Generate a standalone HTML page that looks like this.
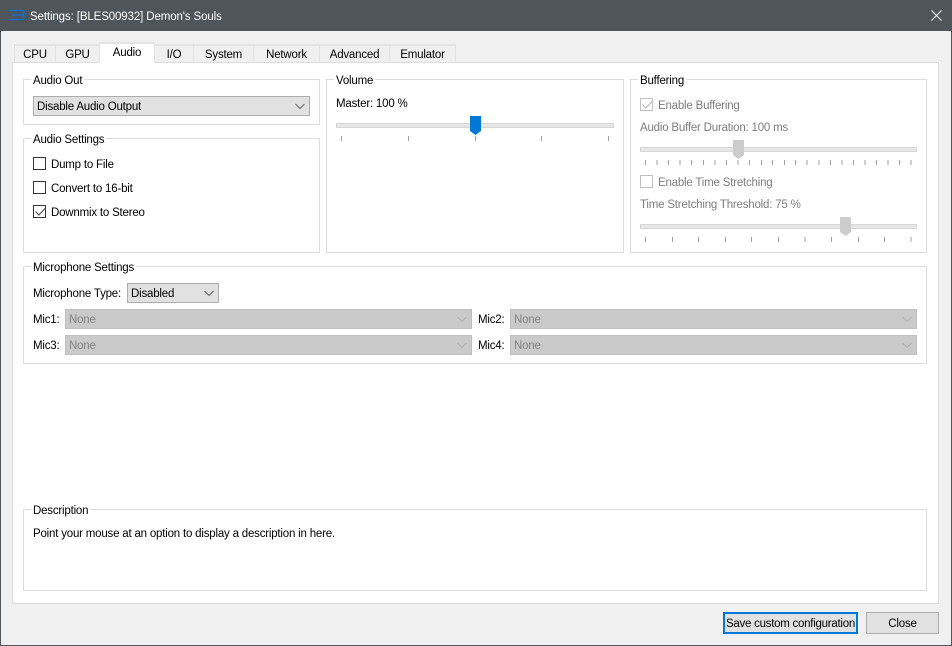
<!DOCTYPE html>
<html><head><meta charset="utf-8"><style>
html,body{margin:0;padding:0}
body{width:952px;height:646px;overflow:hidden;position:relative;background:#f0f0f0;font:11.5px/16px "Liberation Sans",sans-serif;color:#000;letter-spacing:-.2px}
div,span.t{position:absolute;box-sizing:border-box;white-space:nowrap}
.t{height:18px;line-height:18px}
.g{border:1px solid #dcdcdc;background:#fff}
.l{background:#fff;padding:0 2px;height:14px;line-height:14px}
.tab{top:44px;height:18px;background:#f0f0f0;border:2px solid #e3e3e3;border-bottom:0;border-left-width:1px;border-right-width:1px;text-align:center;line-height:19px}
.c{background:#e1e1e1;border:1px solid #adadad;height:20px;line-height:20px;padding-left:3px}
.d{background:#cacaca;border-color:#bfbfbf;color:#838383}
.c svg{position:absolute;right:3px;top:5px}
.cb{width:13px;height:13px;border:1px solid #333;background:#fff}
.cb.x{border-color:#c0c0c0}
.dis{color:#7d7d7d}
.gr{height:5px;background:#e6e6e6;border:1px solid #d6d6d6}
.tk{width:1px;height:5px;background:#a0a0a0}
.b{background:#e1e1e1;border:1px solid #adadad;height:22px;top:612px;text-align:center;line-height:22px}
</style></head><body>
<div style="left:0;top:0;width:952px;height:31px;background:#4f565b"></div>
<div style="left:0;top:0;width:1px;height:646px;background:#4f565b"></div>
<div style="left:951px;top:0;width:1px;height:646px;background:#4f565b"></div>
<div style="left:0;top:645px;width:952px;height:1px;background:#4f565b"></div>
<svg style="position:absolute;left:9px;top:9px" width="16" height="12"><path d="M0 1.5H13Q15 1.5 15 3V4.5Q15 6 13 6H3M3 6H13Q15 6 15 7.5V9Q15 10.5 13 10.5H0" fill="none" stroke="#0a6fd8" stroke-width="1.3"/></svg>
<div class="t" style="left:30px;top:8px;color:#fff;letter-spacing:-.12px">Settings: [BLES00932] Demon's Souls</div>
<svg style="position:absolute;left:931px;top:10px" width="11" height="11"><path d="M.5 .5L10.5 10.5M10.5 .5L.5 10.5" stroke="#fff" stroke-width="1.1"/></svg>

<div style="left:12px;top:62px;width:927px;height:542px;background:#fff;border:1px solid #dcdcdc"></div>
<div class="tab" style="left:14px;width:42px">CPU</div>
<div class="tab" style="left:55px;width:45px">GPU</div>
<div class="tab" style="left:154px;width:40px">I/O</div>
<div class="tab" style="left:193px;width:61px">System</div>
<div class="tab" style="left:253px;width:67px">Network</div>
<div class="tab" style="left:319px;width:71px">Advanced</div>
<div class="tab" style="left:389px;width:67px">Emulator</div>
<div class="tab" style="left:99px;top:42px;width:56px;height:21px;background:#fff;line-height:19px;border-color:#e3e3e3">Audio</div>

<div class="g" style="left:23px;top:79px;width:297px;height:46px"></div>
<div class="l" style="left:31px;top:74px">Audio Out</div>
<div class="c" style="left:33px;top:96px;width:277px">Disable Audio Output<svg width="12" height="8"><path d="M1.5 2L6 6.5L10.5 2" fill="none" stroke="#666"/></svg></div>

<div class="g" style="left:23px;top:138px;width:297px;height:115px"></div>
<div class="l" style="left:31px;top:133px">Audio Settings</div>
<div class="cb" style="left:33px;top:157px"></div><div class="t" style="left:51px;top:156px">Dump to File</div>
<div class="cb" style="left:33px;top:181px"></div><div class="t" style="left:51px;top:180px">Convert to 16-bit</div>
<div class="cb" style="left:33px;top:205px"><svg style="position:absolute;left:1px;top:1px" width="11" height="9"><path d="M.5 4.5L3.8 8L10.5 1" fill="none" stroke="#555" stroke-width="1.2"/></svg></div><div class="t" style="left:51px;top:204px">Downmix to Stereo</div>

<div class="g" style="left:326px;top:79px;width:298px;height:174px"></div>
<div class="l" style="left:334px;top:74px">Volume</div>
<div class="t" style="left:336px;top:95px">Master: 100 %</div>
<div class="gr" style="left:336px;top:123px;width:278px"></div>
<svg style="position:absolute;left:470px;top:116px" width="11" height="19"><path d="M0 0H11V15L5.5 19L0 15Z" fill="#0078d7"/></svg>
<div class="tk" style="left:341px;top:136px"></div><div class="tk" style="left:408px;top:136px"></div><div class="tk" style="left:475px;top:136px"></div><div class="tk" style="left:541px;top:136px"></div><div class="tk" style="left:608px;top:136px"></div>

<div class="g" style="left:630px;top:79px;width:297px;height:174px"></div>
<div class="l" style="left:638px;top:74px">Buffering</div>
<div class="cb x" style="left:640px;top:98px"><svg style="position:absolute;left:1px;top:1px" width="11" height="9"><path d="M.5 4.5L3.8 8L10.5 1" fill="none" stroke="#bbb" stroke-width="1.2"/></svg></div>
<div class="t dis" style="left:658px;top:97px">Enable Buffering</div>
<div class="t dis" style="left:640px;top:119px">Audio Buffer Duration: 100 ms</div>
<div class="gr" style="left:640px;top:147px;width:277px"></div>
<svg style="position:absolute;left:733px;top:140px" width="11" height="19"><path d="M0 0H11V15L5.5 19L0 15Z" fill="#cccccc"/></svg>
<svg style="position:absolute;left:640px;top:160px" width="280" height="5"><path d="M5.5 0V5M17 0V5M28.5 0V5M40 0V5M51.5 0V5M63.5 0V5M75 0V5M86.5 0V5M98 0V5M109.5 0V5M121.5 0V5M132.5 0V5M144.5 0V5M155.5 0V5M167 0V5M179 0V5M190.5 0V5M202 0V5M213.5 0V5M225 0V5M236.5 0V5M248 0V5M259.5 0V5M271 0V5" stroke="#a0a0a0"/></svg>
<div class="cb x" style="left:640px;top:175px"></div>
<div class="t dis" style="left:658px;top:174px">Enable Time Stretching</div>
<div class="t dis" style="left:640px;top:196px">Time Stretching Threshold: 75 %</div>
<div class="gr" style="left:640px;top:224px;width:277px"></div>
<svg style="position:absolute;left:840px;top:217px" width="11" height="19"><path d="M0 0H11V15L5.5 19L0 15Z" fill="#cccccc"/></svg>
<svg style="position:absolute;left:640px;top:237px" width="280" height="5"><path d="M5.5 0V5M32.5 0V5M58.5 0V5M85.5 0V5M111.5 0V5M138.5 0V5M165 0V5M191.5 0V5M218.5 0V5M244.5 0V5M271 0V5" stroke="#a0a0a0"/></svg>

<div class="g" style="left:23px;top:266px;width:904px;height:98px"></div>
<div class="l" style="left:31px;top:261px">Microphone Settings</div>
<div class="t" style="left:33px;top:285px">Microphone Type:</div>
<div class="c" style="left:127px;top:283px;width:92px">Disabled<svg width="12" height="8"><path d="M1.5 2L6 6.5L10.5 2" fill="none" stroke="#666"/></svg></div>
<div class="t" style="left:33px;top:311px">Mic1:</div>
<div class="c d" style="left:65px;top:309px;width:407px">None<svg width="12" height="8"><path d="M1.5 2L6 6.5L10.5 2" fill="none" stroke="#b0b0b0"/></svg></div>
<div class="t" style="left:478px;top:311px">Mic2:</div>
<div class="c d" style="left:510px;top:309px;width:407px">None<svg width="12" height="8"><path d="M1.5 2L6 6.5L10.5 2" fill="none" stroke="#b0b0b0"/></svg></div>
<div class="t" style="left:33px;top:337px">Mic3:</div>
<div class="c d" style="left:65px;top:335px;width:407px">None<svg width="12" height="8"><path d="M1.5 2L6 6.5L10.5 2" fill="none" stroke="#b0b0b0"/></svg></div>
<div class="t" style="left:478px;top:337px">Mic4:</div>
<div class="c d" style="left:510px;top:335px;width:407px">None<svg width="12" height="8"><path d="M1.5 2L6 6.5L10.5 2" fill="none" stroke="#b0b0b0"/></svg></div>

<div class="g" style="left:23px;top:509px;width:904px;height:82px"></div>
<div class="l" style="left:31px;top:504px">Description</div>
<div class="t" style="left:33px;top:525px">Point your mouse at an option to display a description in here.</div>

<div class="b" style="left:723px;width:135px;border:2px solid #0078d7;line-height:20px;letter-spacing:-.26px">Save custom configuration</div>
<div class="b" style="left:866px;width:73px">Close</div>
</body></html>
